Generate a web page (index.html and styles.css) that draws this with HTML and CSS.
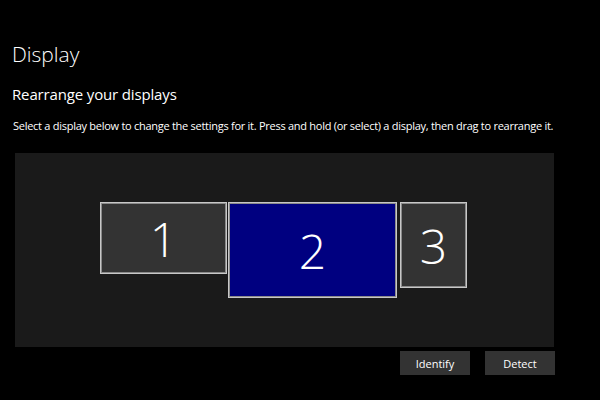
FILE: index.html
```html
<!DOCTYPE html>
<html>
  <head>
    <meta charset="utf-8">
    <title>Display</title>
    <link rel="stylesheet" href="styles.css">
  </head>
  <body>
    <h1 class="title">Display</h1>
    <h2 class="subtitle">Rearrange your displays</h2>
    <p class="hint">Select a display below to change the settings for it. Press and hold (or select) a display, then drag to rearrange it.</p>

    <div class="arrange">
      <div class="monitor mon-1">1</div>
      <div class="monitor mon-2 selected">2</div>
      <div class="monitor mon-3">3</div>
    </div>

    <div class="actions">
      <button class="btn btn-identify">Identify</button>
      <button class="btn btn-detect">Detect</button>
    </div>
  </body>
</html>
```

FILE: styles.css
```css
body, html {
  margin: 0;
}

body {
  background: #000;
  color: #fff;
  font-family: "Open Sans", "Noto Sans", sans-serif;
  width: 600px;
  height: 400px;
  overflow: hidden;
}

.title {
  font-size: 21px;
  font-weight: 300;
  margin: 0;
  padding: 40px 0 0 12px;
  line-height: 29px;
}

.subtitle {
  font-size: 15px;
  font-weight: 400;
  letter-spacing: -0.15px;
  margin: 0;
  padding: 14px 0 0 12px;
  line-height: 22px;
}

.hint {
  font-size: 11px;
  letter-spacing: -0.27px;
  margin: 0;
  padding: 13px 0 0 13px;
  line-height: 16px;
}

.arrange {
  position: relative;
  margin: 19px 0 0 15px;
  width: 539px;
  height: 194px;
  background: #1a1a1a;
}

.monitor {
  position: absolute;
  top: 49px;
  box-sizing: border-box;
  border: 1px solid #c8c8c8;
  box-shadow: inset 0 0 0 1px #8a8a8a;
  background: #333;
  display: flex;
  align-items: center;
  justify-content: center;
  font-family: "Open Sans", sans-serif;
  font-weight: 300;
  font-size: 48px;
}

.mon-1 {
  left: 85px;
  width: 127px;
  height: 72px;
}

.mon-2 {
  left: 213px;
  width: 169px;
  height: 96px;
}

.mon-3 {
  left: 385px;
  width: 67px;
  height: 86px;
}

.selected {
  background: #000080;
}

.actions {
  display: flex;
  gap: 15px;
  width: 555px;
  justify-content: flex-end;
  margin-top: 4px;
}

.btn {
  width: 70px;
  height: 24px;
  border: none;
  background: #333;
  color: #fff;
  font-family: "Open Sans", "Noto Sans", sans-serif;
  font-size: 11px;
  padding: 0;
}
```
